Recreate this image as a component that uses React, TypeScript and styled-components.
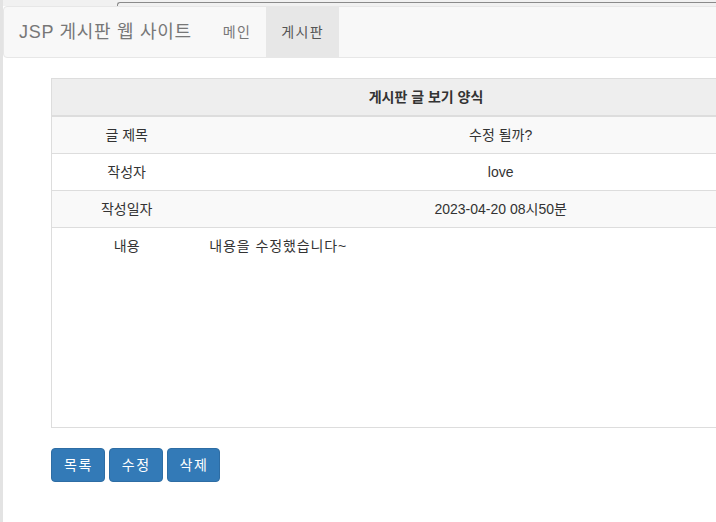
import React, { FC } from "react";
import styled, { createGlobalStyle } from "styled-components";

const GlobalStyle = createGlobalStyle`
  html, body {
    margin: 0;
    padding: 0;
    overflow: hidden;
    background: #fff;
  }
  body {
    font-family: "Liberation Sans", "Noto Sans CJK KR", sans-serif;
    font-size: 14px;
    line-height: 20px;
    color: #333;
  }
`;

const Frame = styled.div`
  width: 1000px;
  min-height: 522px;
  border-left: 3px solid #e3e3e3;
`;

/* 위쪽 창 가장자리 */
const TopStrip = styled.div`
  height: 6px;
  background: #f1f1f1;
  padding: 2px 0 0 114px;
  box-sizing: border-box;
`;

const AddressEdge = styled.div`
  height: 4px;
  border-top: 1px solid #8a8a8a;
  border-left: 1px solid #8a8a8a;
  border-top-left-radius: 3px;
`;

const Navbar = styled.nav`
  display: flex;
  height: 50px;
  margin-bottom: 20px;
  background: #f8f8f8;
  border: 1px solid #e7e7e7;
  border-radius: 4px;
`;

const Brand = styled.a`
  padding: 15px 16px 15px 15px;
  font-size: 18px;
  line-height: 20px;
  letter-spacing: 0.7px;
  color: #777;
  text-decoration: none;
`;

const NavLink = styled.a<{ $active?: boolean }>`
  padding: 15px 15px 15px 15px;
  line-height: 20px;
  letter-spacing: 1.4px;
  color: ${(p) => (p.$active ? "#555" : "#777")};
  background: ${(p) => (p.$active ? "#e7e7e7" : "transparent")};
  text-decoration: none;
`;

const Main = styled.div`
  padding-left: 48px;
`;

const Table = styled.table`
  width: 750px;
  margin-bottom: 20px;
  border-collapse: collapse;
  border-spacing: 0;
  border: 1px solid #dddddd;
  text-align: center;
`;

const HeadCell = styled.th`
  padding: 8px;
  line-height: 20px;
  background-color: #eeeeee;
  border-bottom: 2px solid #ddd;
  font-weight: bold;
  text-align: center;
`;

const Row = styled.tr<{ $striped?: boolean }>`
  background: ${(p) => (p.$striped ? "#f9f9f9" : "#fff")};
`;

const Cell = styled.td<{ $tall?: boolean; $left?: boolean }>`
  padding: 8px;
  line-height: 20px;
  vertical-align: top;
  border-top: 1px solid #ddd;
  height: ${(p) => (p.$tall ? "183px" : "auto")};
  text-align: ${(p) => (p.$left ? "left" : "center")};
  letter-spacing: ${(p) => (p.$left ? "0.9px" : "normal")};
`;

const Buttons = styled.div`
  display: flex;
  gap: 4px;
`;

const Button = styled.a`
  padding: 6px 11px 6px 12px;
  line-height: 20px;
  letter-spacing: 1.5px;
  color: #fff;
  background-color: #337ab7;
  border: 1px solid #2e6da4;
  border-radius: 4px;
  text-decoration: none;
`;

const rows = [
  { label: "글 제목", value: "수정 될까?" },
  { label: "작성자", value: "love" },
  { label: "작성일자", value: "2023-04-20 08시50분" },
];

const App: FC = () => (
  <>
    <GlobalStyle />
    <Frame>
      <TopStrip>
        <AddressEdge />
      </TopStrip>
      <Navbar>
        <Brand href="#">JSP 게시판 웹 사이트</Brand>
        <NavLink href="#">메인</NavLink>
        <NavLink href="#" $active>
          게시판
        </NavLink>
      </Navbar>
      <Main>
        <Table>
          <thead>
            <tr>
              <HeadCell colSpan={3}>게시판 글 보기 양식</HeadCell>
            </tr>
          </thead>
          <tbody>
            {rows.map((r, i) => (
              <Row key={r.label} $striped={i % 2 === 0}>
                <Cell style={i === 0 ? { width: "20%" } : undefined}>{r.label}</Cell>
                <Cell colSpan={2}>{r.value}</Cell>
              </Row>
            ))}
            <Row>
              <Cell>내용</Cell>
              <Cell colSpan={2} $tall $left>
                내용을 수정했습니다~
              </Cell>
            </Row>
          </tbody>
        </Table>
        <Buttons>
          <Button href="#">목록</Button>
          <Button href="#">수정</Button>
          <Button href="#">삭제</Button>
        </Buttons>
      </Main>
    </Frame>
  </>
);

export default App;
